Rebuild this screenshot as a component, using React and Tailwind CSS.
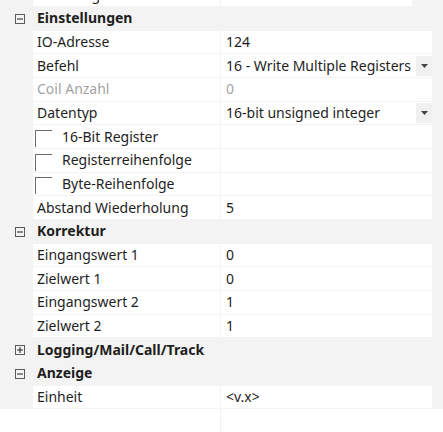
import React from 'react';

const rows = [
  { type: 'group', label: 'Einstellungen', open: true },
  { label: 'IO-Adresse', value: '124' },
  { label: 'Befehl', value: '16 - Write Multiple Registers', dropdown: true },
  { label: 'Coil Anzahl', value: '0', disabled: true },
  { label: 'Datentyp', value: '16-bit unsigned integer', dropdown: true },
  { label: '16-Bit Register', check: true },
  { label: 'Registerreihenfolge', check: true },
  { label: 'Byte-Reihenfolge', check: true },
  { label: 'Abstand Wiederholung', value: '5' },
  { type: 'group', label: 'Korrektur', open: true },
  { label: 'Eingangswert 1', value: '0' },
  { label: 'Zielwert 1', value: '0' },
  { label: 'Eingangswert 2', value: '1' },
  { label: 'Zielwert 2', value: '1' },
  { type: 'group', label: 'Logging/Mail/Call/Track', open: false },
  { type: 'group', label: 'Anzeige', open: true },
  { label: 'Einheit', value: '<v.x>' },
];

const ToggleBox = ({ open }) => (
  <svg width="10" height="10" viewBox="0 0 10 10" className="block">
    <rect x="0.5" y="0.5" width="9" height="9" fill="none" stroke="#5a5a5a" />
    <line x1="2" y1="5" x2="8" y2="5" stroke="#1e1e1e" />
    {!open && <line x1="5" y1="2" x2="5" y2="8" stroke="#1e1e1e" />}
  </svg>
);

const DropButton = () => (
  <div className="w-[16px] h-[20px] bg-[#f0f0f0] flex items-center justify-center shrink-0">
    <svg width="7" height="4" viewBox="0 0 7 4">
      <path d="M0 0 L7 0 L3.5 4 Z" fill="#444" />
    </svg>
  </div>
);

const Row = ({ row }) => {
  if (row.type === 'group') {
    return (
      <div className="flex items-center h-[22.67px] mb-px">
        <div className="w-[33px] pl-[15px] pt-px">
          <ToggleBox open={row.open} />
        </div>
        <span className="pl-[4px] font-bold text-[#1e1e1e]">{row.label}</span>
      </div>
    );
  }
  return (
    <div className="flex h-[22.67px] mb-px">
      <div className="w-[33px] shrink-0" />
      <div className="w-[187px] shrink-0 bg-white flex items-center overflow-hidden whitespace-nowrap">
        {row.check ? (
          <>
            <div className="ml-[2px] w-[17px] h-[17px] mt-[4px] border-t-[1.5px] border-l-[1.5px] border-[#6b6b6b]" />
            <span className="pl-[10px] text-[#1e1e1e]">{row.label}</span>
          </>
        ) : (
          <span className={`pl-[4px] ${row.disabled ? 'text-[#a3a3a3]' : 'text-[#1e1e1e]'}`}>{row.label}</span>
        )}
      </div>
      <div className="w-px shrink-0" />
      <div className="flex-1 bg-white flex items-center justify-between whitespace-nowrap overflow-hidden">
        <span className={`pl-[5px] ${row.disabled ? 'text-[#a3a3a3]' : 'text-[#1e1e1e]'}`}>{row.value}</span>
        {row.dropdown && <DropButton />}
      </div>
    </div>
  );
};

export default function App() {
  return (
    <div
      className="w-[443px] h-[432px] bg-white overflow-hidden flex flex-col text-[14px] leading-none"
      style={{ fontFamily: '"Noto Sans", "Open Sans", sans-serif' }}
    >
      <div className="bg-[#f3f3f3] pr-[11px] -mt-[16.67px]">
        {/* partly scrolled out first row */}
        <div className="flex h-[22.67px] mb-px">
          <div className="w-[33px] shrink-0" />
          <div className="w-[187px] shrink-0 bg-white flex items-center overflow-hidden whitespace-nowrap">
            <span className="pl-[4px] text-[#1e1e1e]">Berechtigte Benutzer / Grm</span>
          </div>
          <div className="w-px shrink-0" />
          <div className="flex-1 flex items-center">
            <div className="flex-1 h-full bg-white flex items-center">
              <span className="pl-[5px] text-[#1e1e1e]">Bearbeiten...</span>
            </div>
            <span className="w-[20px] pl-[6px] text-[#1e1e1e]">...</span>
          </div>
        </div>
        {rows.map((row, i) => (
          <Row key={i} row={row} />
        ))}
      </div>
      <div className="flex-1 flex">
        <div className="w-[220px]" />
        <div className="w-px bg-[#f0f0f0]" />
      </div>
    </div>
  );
}
